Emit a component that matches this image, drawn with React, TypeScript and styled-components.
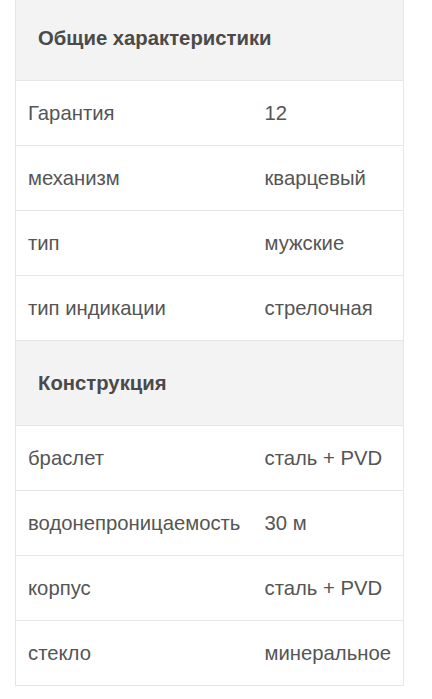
import styled, { createGlobalStyle } from 'styled-components';

const GlobalStyle = createGlobalStyle`
  body {
    margin: 0;
    background: #ffffff;
    font-family: 'Liberation Sans', Arial, sans-serif;
  }
`;

const Page = styled.div`
  padding: 0 0 0 15px;
  margin-top: -5px;
`;

const Table = styled.table`
  width: 389px;
  border-collapse: collapse;
  border: 1px solid #e6e6e6;
  font-size: 20.3px;
  color: #555555;
`;

const HeadCell = styled.th`
  height: 84px;
  padding: 0 22px;
  text-align: left;
  font-weight: 700;
  color: #4a4a4a;
  background: #f3f3f3;
  border-bottom: 1px solid #e6e6e6;
`;

const Cell = styled.td`
  height: 64px;
  padding: 0 12px;
  border-bottom: 1px solid #e6e6e6;
  white-space: nowrap;
`;

type Section = { title: string; rows: [string, string][] };

const sections: Section[] = [
  {
    title: 'Общие характеристики',
    rows: [
      ['Гарантия', '12'],
      ['механизм', 'кварцевый'],
      ['тип', 'мужские'],
      ['тип индикации', 'стрелочная'],
    ],
  },
  {
    title: 'Конструкция',
    rows: [
      ['браслет', 'сталь + PVD'],
      ['водонепроницаемость', '30 м'],
      ['корпус', 'сталь + PVD'],
      ['стекло', 'минеральное'],
    ],
  },
];

export default function App() {
  return (
    <Page>
      <GlobalStyle />
      <Table>
        <tbody>
          {sections.map((s) => [
            <tr key={s.title}>
              <HeadCell colSpan={2}>{s.title}</HeadCell>
            </tr>,
            ...s.rows.map(([k, v]) => (
              <tr key={s.title + k}>
                <Cell>{k}</Cell>
                <Cell>{v}</Cell>
              </tr>
            )),
          ])}
        </tbody>
      </Table>
    </Page>
  );
}
